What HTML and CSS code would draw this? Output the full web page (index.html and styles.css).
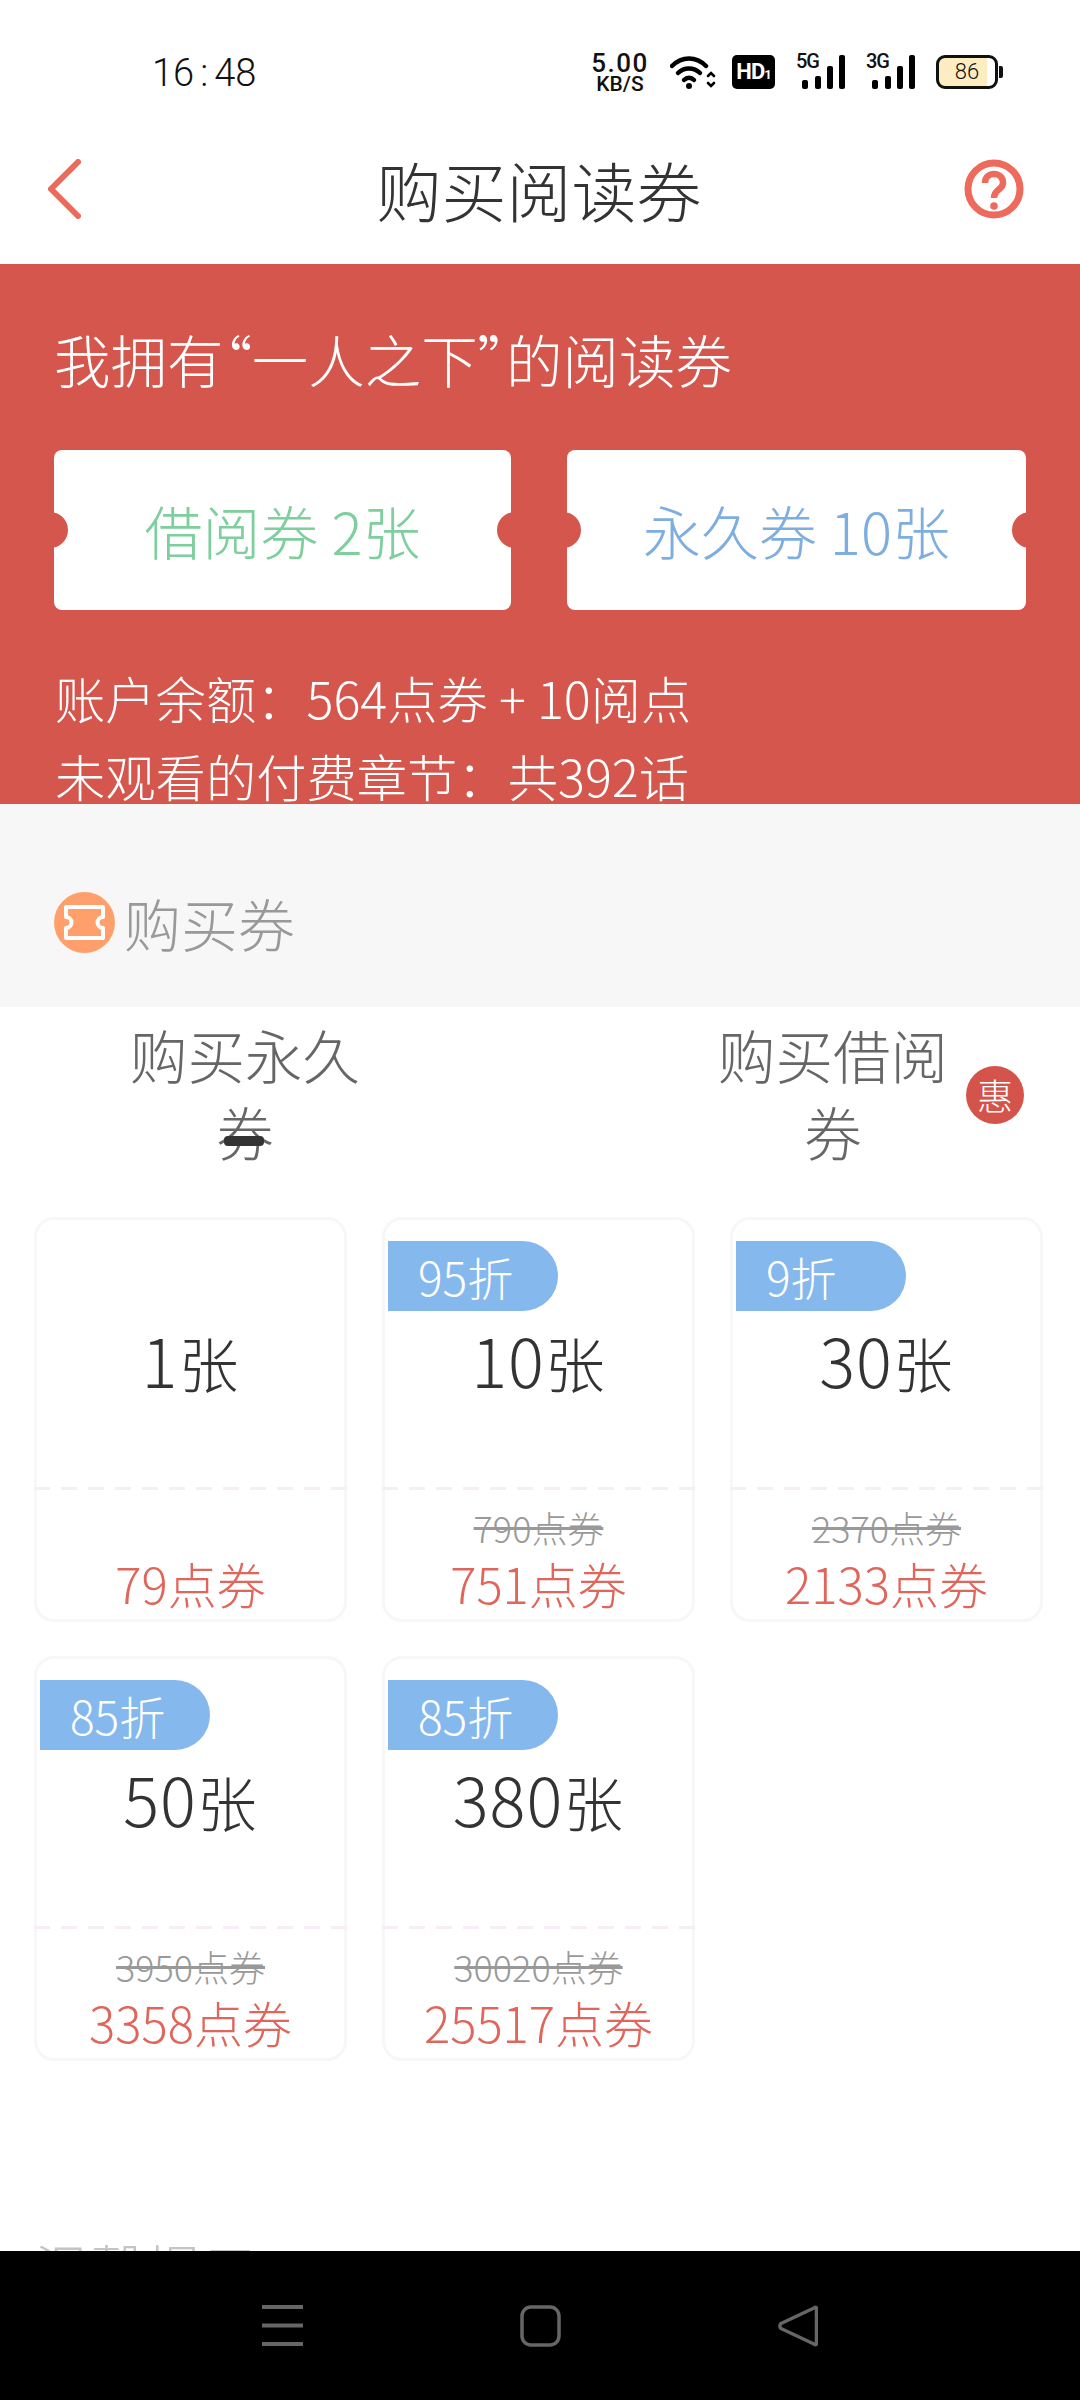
FILE: index.html
```html
<!DOCTYPE html>
<html lang="zh-CN">
<head>
  <meta charset="UTF-8" />
  <meta name="viewport" content="width=device-width, initial-scale=1.0" />
  <title>购买阅读券</title>
  <link rel="stylesheet" href="styles.css">
</head>
<body>
  <div class="screen">
    <!-- 状态栏 -->
    <div class="status-bar">
      <span class="time">16<span class="colon">:</span>48</span>
      <div class="status-icons">
        <div class="speed"><span class="speed-num">5.00</span><span class="speed-unit">KB/S</span></div>
        <svg class="wifi" width="46" height="34" viewBox="0 0 46 34" fill="none" stroke="#000" stroke-linecap="round">
          <path d="M2 10 C12 0 26 0 36 10" stroke-width="4.5"/>
          <path d="M8 17 C14 11 24 11 30 17" stroke-width="4.5"/>
          <path d="M14 24 C17 21 21 21 24 24" stroke-width="4.5"/>
          <circle cx="19" cy="30" r="3" fill="#000" stroke="none"/>
          <path d="M38 20 L41 17 L44 20 M38 27 L41 30 L44 27" stroke-width="2.6"/>
        </svg>
        <span class="hd">HD<small>1</small></span>
        <div class="signal"><span class="net">5G</span><i class="bar b1"></i><i class="bar b2"></i><i class="bar b3"></i><i class="bar b4"></i></div>
        <div class="signal"><span class="net">3G</span><i class="bar b1"></i><i class="bar b2"></i><i class="bar b3"></i><i class="bar b4"></i></div>
        <div class="battery"><div class="battery-body">86</div><div class="battery-tip"></div></div>
      </div>
    </div>

    <!-- 标题栏 -->
    <div class="title-bar">
      <svg width="33" height="60" viewBox="0 0 33 60" fill="none" stroke="#ea6a5c" stroke-width="6" stroke-linecap="round" stroke-linejoin="round">
        <path d="M30 3 L3 30 L30 57"/>
      </svg>
      <h1>购买阅读券</h1>
      <svg width="60" height="60" viewBox="0 0 60 60" fill="none" stroke="#ee6a5c">
        <circle cx="30" cy="30" r="26" stroke-width="7"/>
        <path d="M21 24 C21 12 39 12 39 24 C39 31 30 30 30 39" stroke-width="6.5"/>
        <circle cx="30" cy="47" r="3.8" fill="#ee6a5c" stroke="none"/>
      </svg>
    </div>

    <!-- 我的阅读券 -->
    <section class="summary">
      <h2>我拥有<span class="quote">“</span>一人之下<span class="quote">”</span>的阅读券</h2>
      <div class="tickets">
        <div class="ticket green">借阅券 2张</div>
        <div class="ticket blue">永久券 10张</div>
      </div>
      <p>账户余额：564点券 + 10阅点</p>
      <p>未观看的付费章节：共392话</p>
    </section>

    <div class="section-head">
      <svg width="61" height="61" viewBox="0 0 61 61">
        <circle cx="30.5" cy="30.5" r="30.5" fill="#ffa06c"/>
        <path d="M12 15 H49 V25 A5.500 5.500 0 0 0 49 36 V46 H12 V36 A5.500 5.500 0 0 0 12 25 Z" fill="none" stroke="#fff" stroke-width="4" stroke-linejoin="round"/>
      </svg>
      <span>购买券</span>
    </div>

    <!-- 切换 -->
    <div class="tabs">
      <div class="tab">购买永久券<i class="tab-line"></i></div>
      <div class="tab">购买借阅券</div>
      <span class="hui">惠</span>
    </div>

    <div class="cards">
      <div class="card">
        <div class="card-top">1<small>张</small></div>
        <div class="card-dash"></div>
        <div class="card-bottom"><div class="price">79点券</div></div>
      </div>
      <div class="card">
        <span class="off">95折</span>
        <div class="card-top">10<small>张</small></div>
        <div class="card-dash"></div>
        <div class="card-bottom"><del>790点券</del><div class="price">751点券</div></div>
      </div>
      <div class="card">
        <span class="off">9折</span>
        <div class="card-top">30<small>张</small></div>
        <div class="card-dash"></div>
        <div class="card-bottom"><del>2370点券</del><div class="price">2133点券</div></div>
      </div>
      <div class="card">
        <span class="off">85折</span>
        <div class="card-top">50<small>张</small></div>
        <div class="card-dash"></div>
        <div class="card-bottom"><del>3950点券</del><div class="price">3358点券</div></div>
      </div>
      <div class="card">
        <span class="off">85折</span>
        <div class="card-top">380<small>张</small></div>
        <div class="card-dash"></div>
        <div class="card-bottom"><del>30020点券</del><div class="price">25517点券</div></div>
      </div>
    </div>

    <div class="tips">温馨提示</div>
  </div>

  <!-- 导航栏 -->
  <div class="nav-bar">
    <svg width="41" height="41" viewBox="0 0 41 41" fill="#666">
      <rect x="0" y="0" width="41" height="4"/>
      <rect x="0" y="18.5" width="41" height="4"/>
      <rect x="0" y="37" width="41" height="4"/>
    </svg>
    <svg width="41" height="42" viewBox="0 0 41 42" fill="none" stroke="#666" stroke-width="3.5">
      <rect x="2" y="2" width="37" height="38" rx="9"/>
    </svg>
    <svg width="40" height="42" viewBox="0 0 40 42" fill="none" stroke="#666" stroke-width="3.5" stroke-linejoin="round">
      <path d="M36 3 C38 1.500 38.500 2.500 38.500 4 V38 C38.500 39.500 38 40.500 36 39 L3 23.500 C1.500 22 1.500 20 3 18.500 Z"/>
    </svg>
  </div>
</body>
</html>
```

FILE: styles.css
```css
* {
  box-sizing: border-box;
  margin: 0;
  padding: 0;
}

body {
  width: 1080px;
  height: 2400px;
  overflow: hidden;
  background: #fff;
  font-family: "Noto Sans CJK SC", "Noto Sans", sans-serif;
  font-weight: 300;
  display: flex;
  flex-direction: column;
}

.screen {
  height: 2251px;
  overflow: hidden;
}

/* Status bar */
.status-bar {
  height: 120px;
  padding: 52px 77px 0 152px;
  display: flex;
  justify-content: space-between;
  align-items: flex-start;
}

.time {
  font-family: "Roboto", sans-serif;
  font-weight: 300;
  font-size: 38px;
  line-height: 42px;
  color: #111;
}

.colon {
  margin: 0 6px;
}

.status-icons {
  display: flex;
  align-items: flex-start;
  height: 40px;
  margin-top: 3px;
}

.speed {
  width: 58px;
  display: flex;
  flex-direction: column;
  align-items: center;
  font-family: "Roboto", sans-serif;
  color: #111;
  margin-top: -5px;
}

.speed-num {
  font-size: 26px;
  line-height: 26px;
  font-weight: 500;
  letter-spacing: 1.5px;
}

.speed-unit {
  font-size: 21px;
  line-height: 17px;
  font-weight: 500;
}

.wifi {
  margin-left: 21px;
  margin-top: 1px;
}

.hd {
  width: 43px;
  height: 34px;
  margin-left: 16px;
  background: #000;
  border-radius: 5px;
  color: #fff;
  font-family: "Roboto", sans-serif;
  font-weight: 700;
  font-size: 22px;
  line-height: 34px;
  text-align: center;
  letter-spacing: -1px;
}

.hd small {
  font-size: 13px;
}

.signal {
  position: relative;
  width: 49px;
  height: 34px;
  margin-left: 21px;
}

.net {
  position: absolute;
  left: 0;
  top: -4px;
  font-family: "Roboto", sans-serif;
  font-weight: 500;
  font-size: 20px;
  line-height: 20px;
  letter-spacing: -1px;
  color: #111;
}

.bar {
  position: absolute;
  bottom: 0;
  width: 6px;
  background: #000;
  border-radius: 2px;
}

.b1 { left: 6px; height: 9px; }
.b2 { left: 19px; height: 13px; }
.b3 { left: 31px; height: 23px; }
.b4 { left: 43px; height: 34px; }

.battery {
  display: flex;
  align-items: center;
  margin-left: 21px;
}

.battery-body {
  width: 62px;
  height: 34px;
  border: 3px solid #111;
  border-radius: 9px;
  background: linear-gradient(to right, #fdedc0 86%, #fff 86%);
  font-family: "Roboto", sans-serif;
  font-weight: 300;
  font-size: 22px;
  line-height: 28px;
  text-align: center;
  color: #111;
}

.battery-tip {
  width: 4px;
  height: 12px;
  margin-left: 1px;
  background: #111;
  border-radius: 0 2px 2px 0;
}

/* Title bar */
.title-bar {
  height: 144px;
  padding: 9px 56px 15px 48px;
  display: flex;
  justify-content: space-between;
  align-items: center;
}

.title-bar h1 {
  font-size: 65px;
  font-weight: 300;
  color: #333;
  margin-left: 33px;
}

/* Red summary */
.summary {
  height: 540px;
  overflow: hidden;
  background: #d4564c;
  color: #fff;
  padding: 58px 54px 0;
}

.summary h2 {
  font-size: 56.5px;
  font-weight: 300;
  line-height: 72px;
  margin-bottom: 56px;
}

.quote {
  font-feature-settings: "palt";
}

.summary p {
  font-size: 50.3px;
  line-height: 78px;
  padding-left: 1px;
}

.tickets {
  display: grid;
  grid-template-columns: 457px 459px;
  column-gap: 56px;
  margin-bottom: 48px;
}

.ticket {
  position: relative;
  height: 160px;
  overflow: hidden;
  background: #fff;
  border-radius: 8px;
  font-size: 58px;
  line-height: 160px;
  text-align: center;
}

.ticket::before,
.ticket::after {
  content: "";
  position: absolute;
  top: 62px;
  width: 36px;
  height: 36px;
  border-radius: 50%;
  background: #d4564c;
}

.ticket::before { left: -22px; }
.ticket::after { right: -22px; }

.green { color: #7fcf9e; }
.blue { color: #7eaee0; }

/* Section head */
.section-head {
  height: 203px;
  background: #f7f7f7;
  padding: 33px 54px 0;
  display: flex;
  align-items: center;
  gap: 9px;
  color: #999;
  font-size: 57px;
}

/* Tabs */
.tabs {
  position: relative;
  display: flex;
  justify-content: space-between;
  padding: 9px 117px 0 115px;
  margin-bottom: 47px;
}

.tab {
  position: relative;
  width: 260px;
  font-size: 57.5px;
  line-height: 77px;
  text-align: center;
  color: #666;
}

.tab-line {
  position: absolute;
  left: 109px;
  top: 120px;
  width: 40px;
  height: 10px;
  border-radius: 4px;
  background: #333;
}

.hui {
  position: absolute;
  left: 966px;
  top: 59px;
  width: 58px;
  height: 58px;
  border-radius: 50%;
  background: #d4534a;
  color: #fff;
  font-size: 36px;
  line-height: 56px;
  text-align: center;
}

/* Cards */
.cards {
  display: grid;
  grid-template-columns: repeat(3, 313px);
  grid-auto-rows: 405px;
  column-gap: 35px;
  row-gap: 34px;
  padding-left: 34px;
}

.card {
  position: relative;
  border: 3px solid #f7f7f7;
  border-radius: 20px;
  display: flex;
  flex-direction: column;
  text-align: center;
}

.card-top {
  height: 267px;
  padding-top: 94px;
  font-size: 67px;
  line-height: 90px;
  letter-spacing: 1px;
  color: #333;
}

.card-top small {
  font-size: 60px;
}

.card-dash {
  height: 3px;
  margin: 0 -3px;
  background: repeating-linear-gradient(to right, #f5eef5 0, #f5eef5 16px, transparent 16px, transparent 27px);
}

.card-bottom {
  flex: 1;
  display: flex;
  flex-direction: column;
  justify-content: flex-end;
  padding-bottom: 7px;
}

.card-bottom del {
  font-size: 36px;
  line-height: 46px;
  margin-bottom: 4px;
  color: #999;
}

.price {
  font-size: 49px;
  line-height: 58px;
  color: #e0655a;
}

.off {
  position: absolute;
  left: 3px;
  top: 21px;
  width: 170px;
  height: 70px;
  padding-left: 30px;
  border-radius: 0 35px 35px 0;
  background: #85b8ed;
  color: #fff;
  font-size: 46px;
  line-height: 70px;
  text-align: left;
}

.tips {
  margin-top: 167px;
  padding-left: 34px;
  font-size: 56px;
  line-height: 80px;
  color: #c4c4c4;
}

/* Nav bar */
.nav-bar {
  height: 149px;
  background: #000;
  display: flex;
  padding: 54px 0 0 262px;
  gap: 217px;
}
```
